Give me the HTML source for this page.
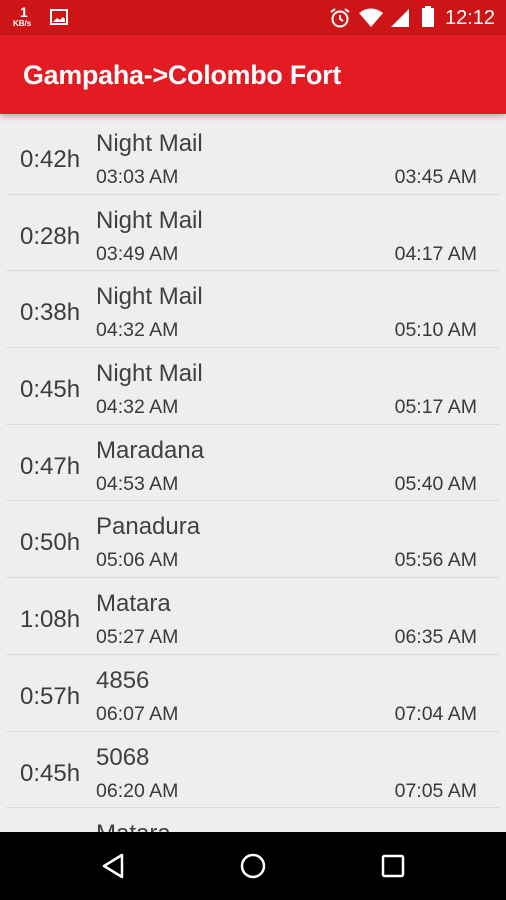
<!DOCTYPE html>
<html><head><meta charset="utf-8"><style>
*{margin:0;padding:0;box-sizing:border-box}
body{width:506px;height:900px;overflow:hidden;background:#eeeeee;font-family:"Liberation Sans",sans-serif;position:relative}
.sb{position:absolute;top:0;left:0;width:506px;height:35px;background:#cd1518;color:#fff}
.tb{position:absolute;top:35px;left:0;width:506px;height:79px;background:#e31c24;box-shadow:0 2px 6px rgba(0,0,0,.3);z-index:2}
.tb h1{position:absolute;left:23px;top:25px;font-size:26.8px;font-weight:bold;color:#fff;letter-spacing:-0.2px}
.list{position:absolute;top:118px;left:0;width:506px}
.row{position:relative;height:76.7px}
.row:after{content:"";position:absolute;left:6px;right:6px;bottom:0;height:1px;background:#dadada}
.d{position:absolute;left:20px;top:28px;font-size:24px;color:#3c3c3c}
.n{position:absolute;left:96px;top:12px;font-size:24px;color:#404040;font-weight:300}
.t1,.t2{position:absolute;top:48px;font-size:19.5px;color:#3a3a3a}
.t1{left:96px}.t2{right:29px}
.nav{position:absolute;top:832px;left:0;width:506px;height:68px;background:#000;z-index:3}
</style></head><body>
<div class="sb">
<div style="position:absolute;left:20px;top:4px;font-size:14px;font-weight:bold">1</div>
<div style="position:absolute;left:13px;top:19px;font-size:8px;font-weight:bold">KB/s</div>
<svg style="position:absolute;left:50px;top:9px" width="18" height="16"><rect x="1" y="1" width="16" height="14" fill="none" stroke="#fff" stroke-width="2"/><path d="M3 13 L7 9 L10 11 L13 8 L15 10 L15 13Z" fill="#fff"/></svg>
<svg style="position:absolute;left:329px;top:7px" width="22" height="22"><circle cx="11" cy="12" r="7.5" fill="none" stroke="#fff" stroke-width="2"/><path d="M11 8v4l3 2M2 5l4-3M20 5l-4-3" stroke="#fff" stroke-width="2" fill="none"/></svg>
<svg style="position:absolute;left:358px;top:8px" width="26" height="20"><path d="M1 5 Q13 -4 25 5 L13 19Z" fill="#fff"/></svg>
<svg style="position:absolute;left:390px;top:8px" width="20" height="20"><path d="M19 1V19H1Z" fill="#fff"/></svg>
<svg style="position:absolute;left:421px;top:6px" width="14" height="22"><rect x="4" y="0" width="6" height="3" fill="#fff"/><rect x="1" y="2" width="12" height="19" fill="#fff"/></svg>
<div style="position:absolute;left:445px;top:7px;font-size:20px">12:12</div>
</div>
<div class="tb"><h1>Gampaha-&gt;Colombo Fort</h1></div>
<div class="list">
<div class="row"><div class="d">0:42h</div><div class="n">Night Mail</div><div class="t1">03:03 AM</div><div class="t2">03:45 AM</div></div>
<div class="row"><div class="d">0:28h</div><div class="n">Night Mail</div><div class="t1">03:49 AM</div><div class="t2">04:17 AM</div></div>
<div class="row"><div class="d">0:38h</div><div class="n">Night Mail</div><div class="t1">04:32 AM</div><div class="t2">05:10 AM</div></div>
<div class="row"><div class="d">0:45h</div><div class="n">Night Mail</div><div class="t1">04:32 AM</div><div class="t2">05:17 AM</div></div>
<div class="row"><div class="d">0:47h</div><div class="n">Maradana</div><div class="t1">04:53 AM</div><div class="t2">05:40 AM</div></div>
<div class="row"><div class="d">0:50h</div><div class="n">Panadura</div><div class="t1">05:06 AM</div><div class="t2">05:56 AM</div></div>
<div class="row"><div class="d">1:08h</div><div class="n">Matara</div><div class="t1">05:27 AM</div><div class="t2">06:35 AM</div></div>
<div class="row"><div class="d">0:57h</div><div class="n">4856</div><div class="t1">06:07 AM</div><div class="t2">07:04 AM</div></div>
<div class="row"><div class="d">0:45h</div><div class="n">5068</div><div class="t1">06:20 AM</div><div class="t2">07:05 AM</div></div>
<div class="row"><div class="n">Matara</div></div>
</div>
<div class="nav">
<svg style="position:absolute;left:100px;top:20px" width="26" height="28"><path d="M22 3 L4 14 L22 25Z" fill="none" stroke="#fff" stroke-width="2.5" stroke-linejoin="round"/></svg>
<svg style="position:absolute;left:239px;top:20px" width="28" height="28"><circle cx="14" cy="14" r="11" fill="none" stroke="#fff" stroke-width="2.5"/></svg>
<svg style="position:absolute;left:380px;top:21px" width="26" height="26"><rect x="3" y="3" width="20" height="20" rx="1.5" fill="none" stroke="#fff" stroke-width="2.5"/></svg>
</div>
</body></html>
